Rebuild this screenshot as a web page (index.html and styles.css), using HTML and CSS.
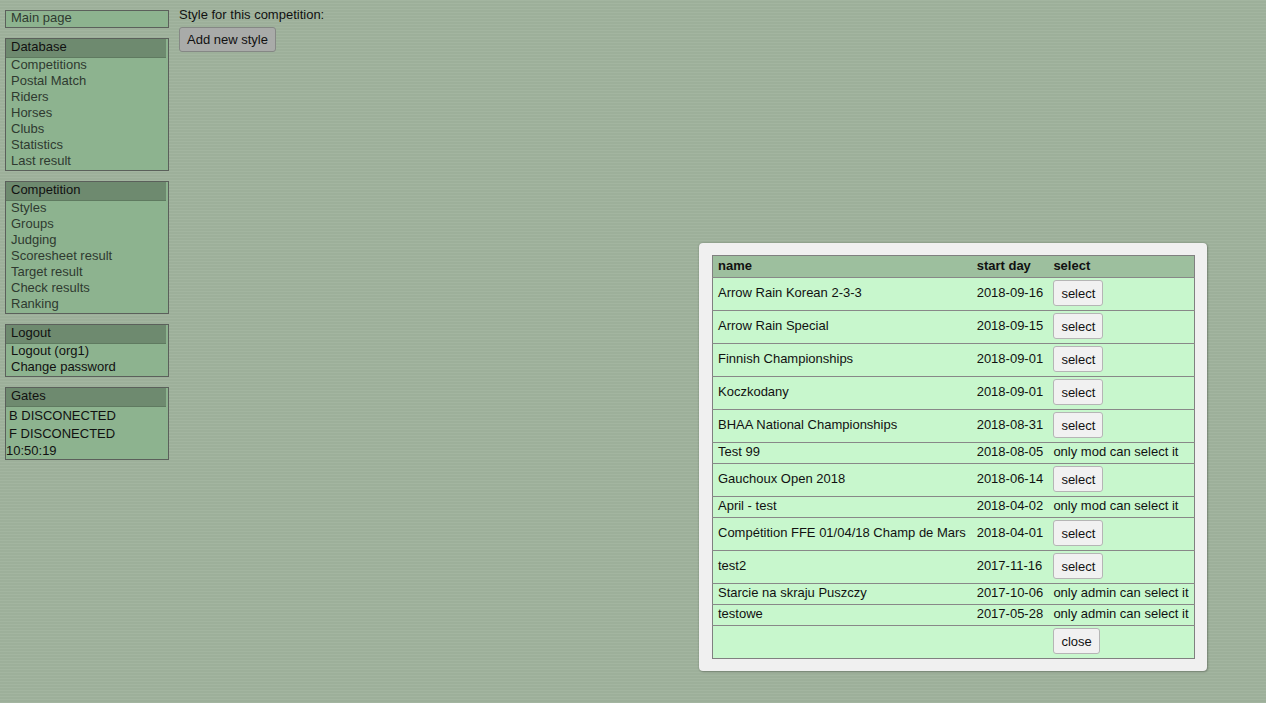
FILE: index.html
```html
<!DOCTYPE html>
<html>
<head>
<meta charset="utf-8">
<link rel="stylesheet" href="styles.css">
</head>
<body>
<div class="page">
  <nav class="sidebar">
    <div class="box single"><a class="item">Main page</a></div>
    <div class="box">
      <div class="head">Database</div>
      <a class="item">Competitions</a>
      <a class="item">Postal Match</a>
      <a class="item">Riders</a>
      <a class="item">Horses</a>
      <a class="item">Clubs</a>
      <a class="item">Statistics</a>
      <a class="item">Last result</a>
    </div>
    <div class="box">
      <div class="head">Competition</div>
      <a class="item">Styles</a>
      <a class="item">Groups</a>
      <a class="item">Judging</a>
      <a class="item">Scoresheet result</a>
      <a class="item">Target result</a>
      <a class="item">Check results</a>
      <a class="item">Ranking</a>
    </div>
    <div class="box">
      <div class="head">Logout</div>
      <a class="item dark">Logout (org1)</a>
      <a class="item dark">Change password</a>
    </div>
    <div class="box gates">
      <div class="head">Gates</div>
      <div class="gate">B DISCONECTED</div>
      <div class="gate">F DISCONECTED</div>
      <div class="clock">10:50:19</div>
    </div>
  </nav>
  <main class="content">
    <div class="label">Style for this competition:</div>
    <button class="btn add">Add new style</button>
  </main>
</div>

<div class="dialog">
  <table class="list">
    <thead>
      <tr><th>name</th><th>start day</th><th>select</th></tr>
    </thead>
    <tbody>
      <tr><td>Arrow Rain Korean 2-3-3</td><td>2018-09-16</td><td><button class="btn sel">select</button></td></tr>
      <tr><td>Arrow Rain Special</td><td>2018-09-15</td><td><button class="btn sel">select</button></td></tr>
      <tr><td>Finnish Championships</td><td>2018-09-01</td><td><button class="btn sel">select</button></td></tr>
      <tr><td>Koczkodany</td><td>2018-09-01</td><td><button class="btn sel">select</button></td></tr>
      <tr><td>BHAA National Championships</td><td>2018-08-31</td><td><button class="btn sel">select</button></td></tr>
      <tr><td>Test 99</td><td>2018-08-05</td><td>only mod can select it</td></tr>
      <tr><td>Gauchoux Open 2018</td><td>2018-06-14</td><td><button class="btn sel">select</button></td></tr>
      <tr><td>April - test</td><td>2018-04-02</td><td>only mod can select it</td></tr>
      <tr><td>Compétition FFE 01/04/18 Champ de Mars</td><td>2018-04-01</td><td><button class="btn sel">select</button></td></tr>
      <tr><td>test2</td><td>2017-11-16</td><td><button class="btn sel">select</button></td></tr>
      <tr><td>Starcie na skraju Puszczy</td><td>2017-10-06</td><td>only admin can select it</td></tr>
      <tr><td>testowe</td><td>2017-05-28</td><td>only admin can select it</td></tr>
      <tr><td></td><td></td><td><button class="btn sel">close</button></td></tr>
    </tbody>
  </table>
</div>
</body>
</html>
```

FILE: styles.css
```css
html, body {
  margin: 0;
  padding: 0;
  height: 100%;
}
body {
  font-family: "Liberation Sans", Arial, sans-serif;
  font-size: 13px;
  color: #111;
  background-color: #a0b39d;
  background-image: repeating-linear-gradient(180deg, rgba(255,255,255,0.03) 0px, rgba(255,255,255,0.03) 1px, rgba(0,0,0,0.02) 1px, rgba(0,0,0,0.02) 3px);
}
.page {
  display: flex;
  align-items: flex-start;
  gap: 10px;
  padding: 8px 0 0 5px;
}
.sidebar {
  width: 164px;
  margin-top: 2px;
  display: flex;
  flex-direction: column;
  gap: 10px;
}
.box {
  background: #8db38f;
  border: 1px solid #5b605b;
  display: flex;
  flex-direction: column;
  padding-bottom: 1px;
}
.box.single {
  padding-bottom: 0;
}
.head {
  background: #6e8a6f;
  color: #111;
  height: 16px;
  line-height: 16px;
  padding: 0 0 2px 5px;
  margin-right: 2px;
  border-bottom: 1px solid #5f7a60;
  margin-bottom: -1px;
}
.gates .head {
  margin-bottom: 0;
}
.item {
  display: block;
  color: #2f3a30;
  line-height: 16px;
  padding-left: 5px;
}
.box.single .item {
  line-height: 14px;
  padding-bottom: 2px;
}
.item.dark {
  color: #111;
}
.gate {
  line-height: 18px;
  padding-left: 3px;
  color: #111;
}
.clock {
  line-height: 15px;
  color: #111;
}
.content {
  display: flex;
  flex-direction: column;
  align-items: flex-start;
  gap: 5px;
}
.label {
  line-height: 14px;
}
.btn {
  font-family: "Liberation Sans", Arial, sans-serif;
  font-size: 13px;
  color: #111;
  border-radius: 3px;
  cursor: pointer;
}
.btn.add {
  background: #a9aba9;
  border: 1px solid #858885;
  height: 25px;
  padding: 0 7px;
}
.dialog {
  position: absolute;
  left: 699px;
  top: 243px;
  background: #f0f0f0;
  border-radius: 4px;
  padding: 12px 12px 12px 13px;
  box-shadow: 0 0 2px rgba(0,0,0,0.25), 1px 1px 2px rgba(0,0,0,0.2);
}
.list {
  width: 483px;
  border-collapse: collapse;
  border: 1px solid #808080;
  background: #c8f7cd;
}
.list th {
  background: #9dbf9e;
  text-align: left;
  font-weight: bold;
  padding: 2px 5px 4px;
  line-height: 15px;
  white-space: nowrap;
}
.list td {
  padding: 2px 5px 4px;
  line-height: 14px;
  white-space: nowrap;
  color: #111;
  border-top: 1px solid #888;
}
.btn.sel {
  background: #f1f1f1;
  border: 1px solid #b5b5b5;
  height: 26px;
  padding: 0 7px;
  display: block;
}
```
